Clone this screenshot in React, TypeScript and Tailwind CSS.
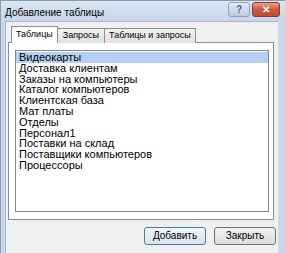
import React from "react";

const items = [
  "Видеокарты",
  "Доставка клиентам",
  "Заказы на компьютеры",
  "Каталог компьютеров",
  "Клиентская база",
  "Мат платы",
  "Отделы",
  "Персонал1",
  "Поставки на склад",
  "Поставщики компьютеров",
  "Процессоры",
];

export default function App() {
  return (
    <div
      className="w-[285px] h-[253px] flex flex-col bg-[#c9d8ea] border-l border-t border-[#8a9bb0] overflow-hidden"
      style={{ fontFamily: '"Liberation Sans", Arial, sans-serif' }}
    >
      {/* Title bar */}
      <div className="h-[20px] flex items-start justify-between pl-[4px] pr-[5px] bg-gradient-to-b from-[#dbe6f2] to-[#c6d6e9]">
        <span className="text-[10px] leading-none text-black mt-[7px]">Добавление таблицы</span>
        <div className="flex gap-[2px] mt-[1px]">
          <div className="w-[22px] h-[15px] rounded-[3px] border border-[#8fa3bd] bg-gradient-to-b from-[#e4ecf5] to-[#b9cbe0] flex items-center justify-center text-[10px] font-bold text-[#4f6a8c] leading-none">
            ?
          </div>
          <div className="w-[28px] h-[15px] rounded-[3px] border border-[#8c3a2e] bg-gradient-to-b from-[#e8a08e] via-[#d0573f] to-[#c44a33] flex items-center justify-center text-[10px] font-bold text-white leading-none">
            ✕
          </div>
        </div>
      </div>
      {/* Client area */}
      <div className="flex-1 ml-[4px] mr-[7px] bg-[#f0f0f0] border-l border-t border-[#aab9cc] flex flex-col pt-[4px]">
        {/* Tabs */}
        <div className="flex items-end pl-[5px] h-[17px] relative z-10">
          <div className="h-[17px] px-[4px] flex items-center bg-white border border-b-0 border-[#898c95] text-[9px] text-black">
            Таблицы
          </div>
          <div className="h-[15px] px-[5px] flex items-center bg-gradient-to-b from-[#f2f2f2] to-[#e1e1e1] border border-l-0 border-b-0 border-[#898c95] text-[9px] text-black">
            Запросы
          </div>
          <div className="h-[15px] px-[4px] flex items-center bg-gradient-to-b from-[#f2f2f2] to-[#e1e1e1] border border-l-0 border-b-0 border-[#898c95] text-[9px] text-black">
            Таблицы и запросы
          </div>
        </div>
        {/* Panel */}
        <div className="ml-[2px] w-[266px] h-[178px] -mt-px bg-white border border-[#898c95] pl-[6px] pr-[4px] pt-[7px]">
          <div className="h-[162px] border border-[#828790] bg-white pt-px">
            {items.map((it, i) => (
              <div
                key={it}
                className={
                  "h-[10.8px] leading-[10.8px] text-[11px] pl-[3px] text-black whitespace-nowrap " +
                  (i === 0 ? "bg-[#b4d0f2]" : "")
                }
              >
                {it}
              </div>
            ))}
          </div>
        </div>
        {/* Buttons */}
        <div className="flex justify-end gap-[8px] pr-[2px] mt-[7px]">
          <button className="w-[62px] h-[18px] rounded-[3px] border border-[#3c7fb1] bg-gradient-to-b from-[#f4f7fa] to-[#d9e3ec] text-[10px] text-black leading-none">
            Добавить
          </button>
          <button className="w-[62px] h-[18px] rounded-[3px] border border-[#707070] bg-gradient-to-b from-[#f2f2f2] to-[#dcdcdc] text-[10px] text-black leading-none">
            Закрыть
          </button>
        </div>
      </div>
    </div>
  );
}
